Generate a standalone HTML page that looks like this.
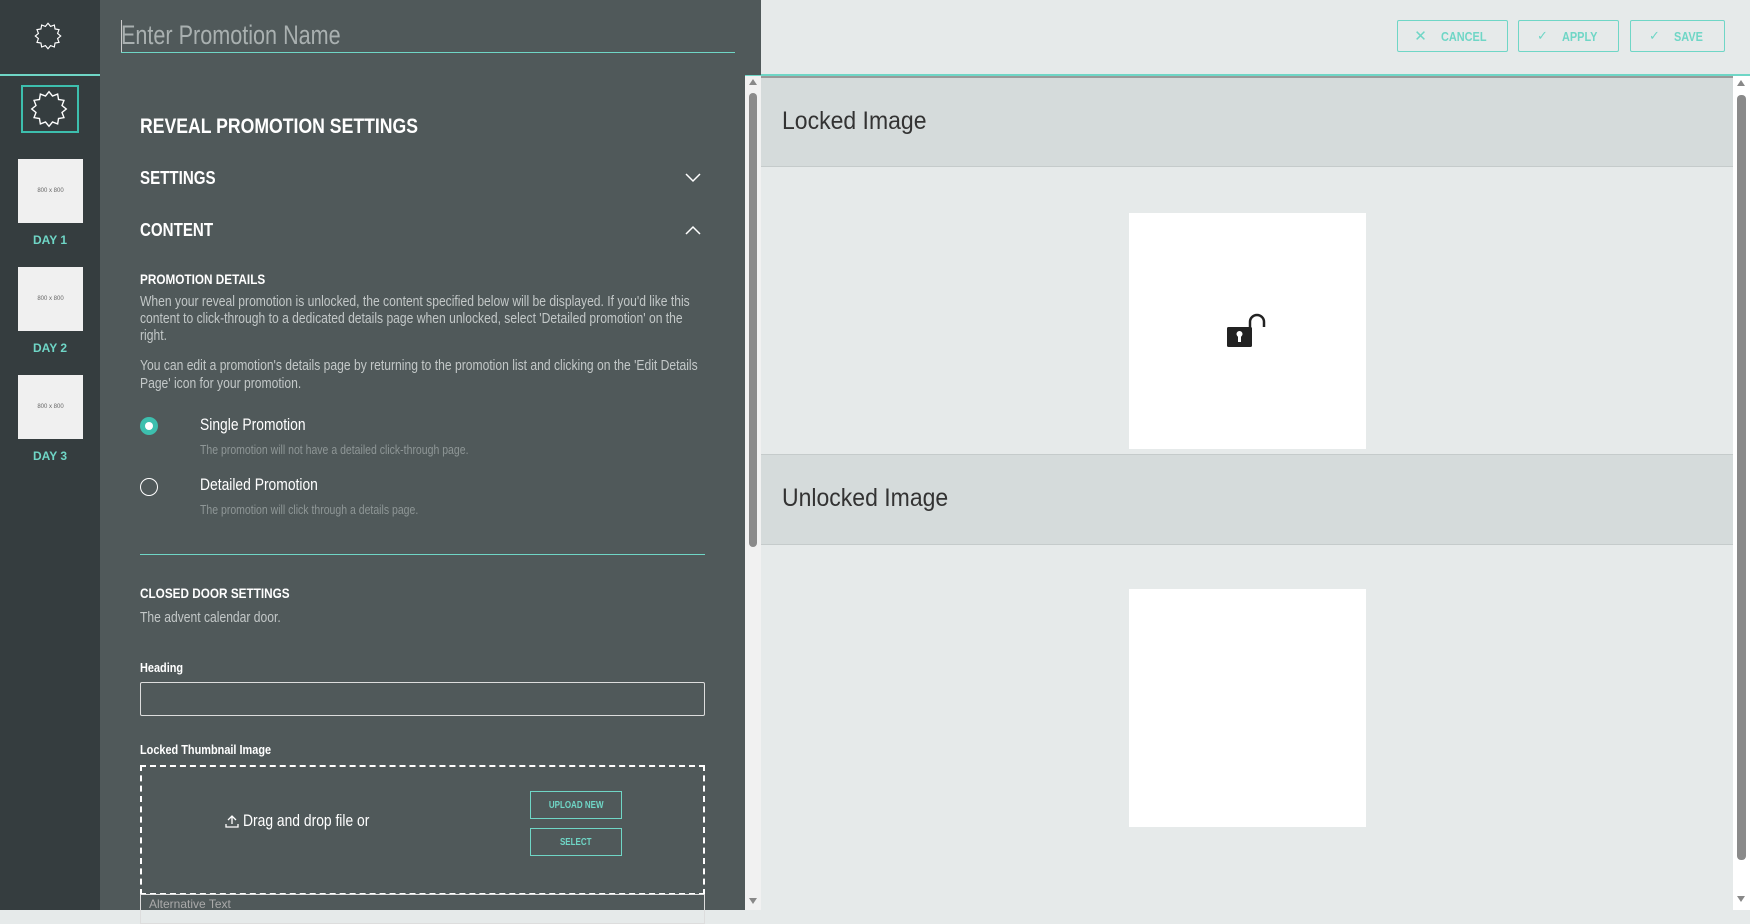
<!DOCTYPE html>
<html><head><meta charset="utf-8"><style>
*{margin:0;padding:0;box-sizing:border-box}
body{width:1750px;height:910px;overflow:hidden;font-family:"Liberation Sans",sans-serif;background:#e6eaea;position:relative}
.abs{position:absolute}
.sq{display:inline-block;transform:scaleX(.84);transform-origin:0 0;white-space:nowrap}
#side{left:0;top:0;width:100px;height:910px;background:#353d3f}
#topl{left:100px;top:0;width:661px;height:75px;background:#50595a}
.teal{color:#6fd6c6}
.btn{position:absolute;top:20px;height:32px;border:1.5px solid #6fd6c6;border-radius:2px;color:#6fd6c6;font-weight:bold;font-size:13px;display:flex;align-items:center;justify-content:center;gap:14px}
.thumb{position:absolute;left:18px;width:65px;height:64px;background:#f0f0f0;font-size:6px;color:#666;display:flex;align-items:center;justify-content:center}
.day{position:absolute;left:0;width:100px;text-align:center;color:#6fd6c6;font-size:12px;font-weight:bold}
.h{position:absolute;left:40px;font-weight:bold;color:#fff;white-space:nowrap}
.p{position:absolute;left:40px;color:#c3c8c8;font-size:14.6px;line-height:17px;width:685px;transform:scaleX(.83);transform-origin:0 0}
</style></head><body>
<div id="side" class="abs"></div>
<svg class="abs" style="left:34px;top:22px" width="28" height="28" viewBox="-1.1 -1.1 2.2 2.2"><polygon fill="none" stroke="#fff" stroke-width="0.09" points="0,-1 .202,-.753 .5,-.866 .552,-.552 .866,-.5 .753,-.202 1,0 .753,.202 .866,.5 .552,.552 .5,.866 .202,.753 0,1 -.202,.753 -.5,.866 -.552,.552 -.866,.5 -.753,.202 -1,0 -.753,-.202 -.866,-.5 -.552,-.552 -.5,-.866 -.202,-.753"/></svg>
<div class="abs" style="left:0;top:74px;width:1750px;height:2px;background:#6fd6c6"></div>
<div class="abs" style="left:21px;top:85px;width:58px;height:48px;border:2px solid #3dbfae"></div>
<svg class="abs" style="left:30px;top:89px" width="38" height="40" viewBox="-1.1 -1.1 2.2 2.2"><polygon fill="none" stroke="#fff" stroke-width="0.08" points="0,-1 .202,-.753 .5,-.866 .552,-.552 .866,-.5 .753,-.202 1,0 .753,.202 .866,.5 .552,.552 .5,.866 .202,.753 0,1 -.202,.753 -.5,.866 -.552,.552 -.866,.5 -.753,.202 -1,0 -.753,-.202 -.866,-.5 -.552,-.552 -.5,-.866 -.202,-.753"/></svg>
<div class="thumb" style="top:159px">800 x 800</div><div class="day" style="top:233px">DAY 1</div>
<div class="thumb" style="top:267px">800 x 800</div><div class="day" style="top:341px">DAY 2</div>
<div class="thumb" style="top:375px">800 x 800</div><div class="day" style="top:449px">DAY 3</div>

<div id="topl" class="abs"></div>
<div class="abs" style="left:121px;top:20px;font-size:27px;color:#a9b0b0"><span class="sq" style="transform:scaleX(.8)">Enter Promotion Name</span></div>
<div class="abs" style="left:121px;top:20px;width:1px;height:32px;background:#ccc"></div>
<div class="abs" style="left:121px;top:52px;width:614px;height:1px;background:#6fd6c6"></div>

<div class="btn" style="left:1397px;width:111px"><span style="font-weight:normal;font-size:15px">✕</span><span class="sq" style="width:50px">CANCEL</span></div>
<div class="btn" style="left:1518px;width:101px"><span style="font-weight:normal">✓</span><span class="sq" style="width:38px">APPLY</span></div>
<div class="btn" style="left:1630px;width:95px"><span style="font-weight:normal">✓</span><span class="sq" style="width:32px">SAVE</span></div>

<div class="abs" style="left:100px;top:75px;width:645px;height:835px;background:#50595a;color:#fff">
<div class="h" style="top:40px;font-size:21px"><span class="sq">REVEAL PROMOTION SETTINGS</span></div>
<div class="h" style="top:93px;font-size:18px"><span class="sq">SETTINGS</span></div>
<svg class="abs" style="left:585px;top:98px" width="16" height="10"><path d="M1 1 L8 8 L15 1" fill="none" stroke="#fff" stroke-width="1.5"/></svg>
<div class="h" style="top:145px;font-size:18px"><span class="sq">CONTENT</span></div>
<svg class="abs" style="left:585px;top:150px" width="16" height="10"><path d="M1 9 L8 2 L15 9" fill="none" stroke="#fff" stroke-width="1.5"/></svg>
<div class="h" style="top:196px;font-size:14px"><span class="sq">PROMOTION DETAILS</span></div>
<div class="p" style="top:219px">When your reveal promotion is unlocked, the content specified below will be displayed. If you'd like this content to click-through to a dedicated details page when unlocked, select 'Detailed promotion' on the right.</div>
<div class="p" style="top:282px;line-height:18px">You can edit a promotion's details page by returning to the promotion list and clicking on the 'Edit Details Page' icon for your promotion.</div>
<div class="abs" style="left:40px;top:342px;width:18px;height:18px;border-radius:50%;background:#3dbfae"><div style="margin:5px;width:8px;height:8px;border-radius:50%;background:#fff"></div></div>
<div class="abs" style="left:100px;top:341px;font-size:16.5px;color:#fff"><span class="sq">Single Promotion</span></div>
<div class="abs" style="left:100px;top:368px;font-size:12.5px;color:#8e9696"><span class="sq">The promotion will not have a detailed click-through page.</span></div>
<div class="abs" style="left:40px;top:403px;width:18px;height:18px;border-radius:50%;border:1.5px solid #fff"></div>
<div class="abs" style="left:100px;top:401px;font-size:16.5px;color:#fff"><span class="sq">Detailed Promotion</span></div>
<div class="abs" style="left:100px;top:428px;font-size:12.5px;color:#8e9696"><span class="sq">The promotion will click through a details page.</span></div>
<div class="abs" style="left:40px;top:479px;width:565px;height:1px;background:#6fd6c6"></div>
<div class="h" style="top:510px;font-size:14px"><span class="sq">CLOSED DOOR SETTINGS</span></div>
<div class="p" style="top:535px">The advent calendar door.</div>
<div class="h" style="top:585px;font-size:13px"><span class="sq">Heading</span></div>
<div class="abs" style="left:40px;top:607px;width:565px;height:34px;border:1px solid #ddd;border-radius:2px"></div>
<div class="h" style="top:667px;font-size:13px"><span class="sq">Locked Thumbnail Image</span></div>
<div class="abs" style="left:40px;top:690px;width:565px;height:130px;border:2px dashed #fff"></div>
<svg class="abs" style="left:125px;top:739px" width="14" height="14"><path d="M7 10 V2 M3 6 L7 2 L11 6 M1 10 V13 H13 V10" fill="none" stroke="#fff" stroke-width="1.3"/></svg>
<div class="abs" style="left:143px;top:737px;font-size:16.5px;color:#fff"><span class="sq">Drag and drop file or</span></div>
<div class="abs teal" style="left:430px;top:716px;width:92px;height:28px;border:1.5px solid #6fd6c6;font-size:10px;font-weight:bold;display:flex;align-items:center;justify-content:center"><span style="transform:scaleX(.8);display:inline-block;white-space:nowrap">UPLOAD NEW</span></div>
<div class="abs teal" style="left:430px;top:753px;width:92px;height:28px;border:1.5px solid #6fd6c6;font-size:10px;font-weight:bold;display:flex;align-items:center;justify-content:center"><span style="transform:scaleX(.8);display:inline-block">SELECT</span></div>
<div class="abs" style="left:40px;top:819px;width:565px;height:30px;border:1px solid #ddd;padding:2px 8px;font-size:12px;color:#aaa">Alternative Text</div>
</div>
<div class="abs" style="left:745px;top:76px;width:16px;height:834px;background:#f1f1f1"></div>
<div class="abs" style="left:749px;top:93px;width:8px;height:454px;background:#8a8a8a;border-radius:4px"></div>
<div class="abs" style="left:749px;top:79px;width:0;height:0;border-left:4px solid transparent;border-right:4px solid transparent;border-bottom:6px solid #888"></div>
<div class="abs" style="left:749px;top:898px;width:0;height:0;border-left:4px solid transparent;border-right:4px solid transparent;border-top:6px solid #888"></div>

<div class="abs" style="left:761px;top:76px;width:972px;height:91px;background:#d5dbdb;border-top:2px solid #999;border-bottom:1px solid #c5cbcb"></div>
<div class="abs" style="left:782px;top:107px;font-size:25px;color:#333"><span class="sq" style="transform:scaleX(.92)">Locked Image</span></div>
<div class="abs" style="left:1129px;top:213px;width:237px;height:236px;background:#fff"></div>
<svg class="abs" style="left:1225px;top:312px" width="45" height="40" viewBox="0 0 45 40"><path d="M25 18 V10 a7 7 0 0 1 14 0 V15" fill="none" stroke="#222" stroke-width="2.5"/><rect x="2" y="15" width="25" height="20" rx="1.5" fill="#222"/><circle cx="14.5" cy="22" r="3" fill="#fff"/><rect x="13" y="23" width="3" height="7" fill="#fff"/></svg>
<div class="abs" style="left:761px;top:454px;width:972px;height:91px;background:#d5dbdb;border-top:1px solid #c5cbcb;border-bottom:1px solid #c5cbcb"></div>
<div class="abs" style="left:782px;top:484px;font-size:25px;color:#333"><span class="sq" style="transform:scaleX(.92)">Unlocked Image</span></div>
<div class="abs" style="left:1129px;top:589px;width:237px;height:238px;background:#fff"></div>
<div class="abs" style="left:1733px;top:76px;width:17px;height:834px;background:#fff"></div>
<div class="abs" style="left:1737px;top:95px;width:9px;height:765px;background:#8a8a8a;border-radius:4px"></div>
<div class="abs" style="left:1737px;top:80px;width:0;height:0;border-left:4.5px solid transparent;border-right:4.5px solid transparent;border-bottom:6px solid #888"></div>
<div class="abs" style="left:1737px;top:896px;width:0;height:0;border-left:4.5px solid transparent;border-right:4.5px solid transparent;border-top:6px solid #888"></div>
</body></html>
